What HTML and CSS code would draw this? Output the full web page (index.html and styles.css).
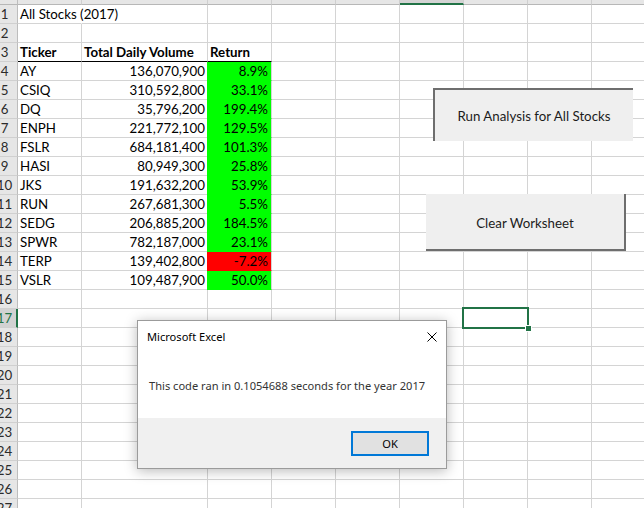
FILE: index.html
```html
<!DOCTYPE html>
<html>
<head>
<meta charset="utf-8">
<link rel="stylesheet" href="styles.css">
</head>
<body>
<div class="sheet">
  <div class="ch corner"></div><div class="ch"></div><div class="ch"></div><div class="ch"></div><div class="ch"></div><div class="ch"></div><div class="ch sel"></div><div class="ch"></div><div class="ch"></div><div class="ch"></div>

  <div class="rh"><span>1</span></div><div class="c over">All Stocks (2017)</div><div class="c"></div><div class="c"></div><div class="c"></div><div class="c"></div><div class="c"></div><div class="c"></div><div class="c"></div><div class="c"></div>
  <div class="rh"><span>2</span></div><div class="c"></div><div class="c"></div><div class="c"></div><div class="c"></div><div class="c"></div><div class="c"></div><div class="c"></div><div class="c"></div><div class="c"></div>
  <div class="rh"><span>3</span></div><div class="c b hb">Ticker</div><div class="c b hb">Total Daily Volume</div><div class="c b hb">Return</div><div class="c"></div><div class="c"></div><div class="c"></div><div class="c"></div><div class="c"></div><div class="c"></div>
  <div class="rh"><span>4</span></div><div class="c">AY</div><div class="c n">136,070,900</div><div class="c n pct g">8.9%</div><div class="c"></div><div class="c"></div><div class="c"></div><div class="c"></div><div class="c"></div><div class="c"></div>
  <div class="rh"><span>5</span></div><div class="c">CSIQ</div><div class="c n">310,592,800</div><div class="c n pct g">33.1%</div><div class="c"></div><div class="c"></div><div class="c"></div><div class="c"></div><div class="c"></div><div class="c"></div>
  <div class="rh"><span>6</span></div><div class="c">DQ</div><div class="c n">35,796,200</div><div class="c n pct g">199.4%</div><div class="c"></div><div class="c"></div><div class="c"></div><div class="c"></div><div class="c"></div><div class="c"></div>
  <div class="rh"><span>7</span></div><div class="c">ENPH</div><div class="c n">221,772,100</div><div class="c n pct g">129.5%</div><div class="c"></div><div class="c"></div><div class="c"></div><div class="c"></div><div class="c"></div><div class="c"></div>
  <div class="rh"><span>8</span></div><div class="c">FSLR</div><div class="c n">684,181,400</div><div class="c n pct g">101.3%</div><div class="c"></div><div class="c"></div><div class="c"></div><div class="c"></div><div class="c"></div><div class="c"></div>
  <div class="rh"><span>9</span></div><div class="c">HASI</div><div class="c n">80,949,300</div><div class="c n pct g">25.8%</div><div class="c"></div><div class="c"></div><div class="c"></div><div class="c"></div><div class="c"></div><div class="c"></div>
  <div class="rh"><span>10</span></div><div class="c">JKS</div><div class="c n">191,632,200</div><div class="c n pct g">53.9%</div><div class="c"></div><div class="c"></div><div class="c"></div><div class="c"></div><div class="c"></div><div class="c"></div>
  <div class="rh"><span>11</span></div><div class="c">RUN</div><div class="c n">267,681,300</div><div class="c n pct g">5.5%</div><div class="c"></div><div class="c"></div><div class="c"></div><div class="c"></div><div class="c"></div><div class="c"></div>
  <div class="rh"><span>12</span></div><div class="c">SEDG</div><div class="c n">206,885,200</div><div class="c n pct g">184.5%</div><div class="c"></div><div class="c"></div><div class="c"></div><div class="c"></div><div class="c"></div><div class="c"></div>
  <div class="rh"><span>13</span></div><div class="c">SPWR</div><div class="c n">782,187,000</div><div class="c n pct g">23.1%</div><div class="c"></div><div class="c"></div><div class="c"></div><div class="c"></div><div class="c"></div><div class="c"></div>
  <div class="rh"><span>14</span></div><div class="c">TERP</div><div class="c n">139,402,800</div><div class="c n pct r">-7.2%</div><div class="c"></div><div class="c"></div><div class="c"></div><div class="c"></div><div class="c"></div><div class="c"></div>
  <div class="rh"><span>15</span></div><div class="c">VSLR</div><div class="c n">109,487,900</div><div class="c n pct g">50.0%</div><div class="c"></div><div class="c"></div><div class="c"></div><div class="c"></div><div class="c"></div><div class="c"></div>
  <div class="rh"><span>16</span></div><div class="c"></div><div class="c"></div><div class="c"></div><div class="c"></div><div class="c"></div><div class="c"></div><div class="c"></div><div class="c"></div><div class="c"></div>
  <div class="rh sel"><span>17</span></div><div class="c"></div><div class="c"></div><div class="c"></div><div class="c"></div><div class="c"></div><div class="c"></div><div class="c"></div><div class="c"></div><div class="c"></div>
  <div class="rh"><span>18</span></div><div class="c"></div><div class="c"></div><div class="c"></div><div class="c"></div><div class="c"></div><div class="c"></div><div class="c"></div><div class="c"></div><div class="c"></div>
  <div class="rh"><span>19</span></div><div class="c"></div><div class="c"></div><div class="c"></div><div class="c"></div><div class="c"></div><div class="c"></div><div class="c"></div><div class="c"></div><div class="c"></div>
  <div class="rh"><span>20</span></div><div class="c"></div><div class="c"></div><div class="c"></div><div class="c"></div><div class="c"></div><div class="c"></div><div class="c"></div><div class="c"></div><div class="c"></div>
  <div class="rh"><span>21</span></div><div class="c"></div><div class="c"></div><div class="c"></div><div class="c"></div><div class="c"></div><div class="c"></div><div class="c"></div><div class="c"></div><div class="c"></div>
  <div class="rh"><span>22</span></div><div class="c"></div><div class="c"></div><div class="c"></div><div class="c"></div><div class="c"></div><div class="c"></div><div class="c"></div><div class="c"></div><div class="c"></div>
  <div class="rh"><span>23</span></div><div class="c"></div><div class="c"></div><div class="c"></div><div class="c"></div><div class="c"></div><div class="c"></div><div class="c"></div><div class="c"></div><div class="c"></div>
  <div class="rh"><span>24</span></div><div class="c"></div><div class="c"></div><div class="c"></div><div class="c"></div><div class="c"></div><div class="c"></div><div class="c"></div><div class="c"></div><div class="c"></div>
  <div class="rh"><span>25</span></div><div class="c"></div><div class="c"></div><div class="c"></div><div class="c"></div><div class="c"></div><div class="c"></div><div class="c"></div><div class="c"></div><div class="c"></div>
  <div class="rh"><span>26</span></div><div class="c"></div><div class="c"></div><div class="c"></div><div class="c"></div><div class="c"></div><div class="c"></div><div class="c"></div><div class="c"></div><div class="c"></div>
  <div class="rh"><span>27</span></div><div class="c"></div><div class="c"></div><div class="c"></div><div class="c"></div><div class="c"></div><div class="c"></div><div class="c"></div><div class="c"></div><div class="c"></div>
</div>

<div class="selbox"><div class="handle"></div></div>

<div class="btn run">Run Analysis for All Stocks</div>
<div class="btn clear">Clear Worksheet</div>

<div class="dlg">
  <div class="dlg-title">
    <span>Microsoft Excel</span>
    <svg class="x" width="10" height="10" viewBox="0 0 10 10"><path d="M0.5 0.5L9.5 9.5M9.5 0.5L0.5 9.5" stroke="#000" stroke-width="1" fill="none"/></svg>
  </div>
  <div class="dlg-body">This code ran in 0.1054688 seconds for the year 2017</div>
  <div class="dlg-foot"><div class="ok">OK</div></div>
</div>
</body>
</html>
```

FILE: styles.css
```css
* { box-sizing: border-box; margin: 0; padding: 0; }
html, body { width: 644px; height: 508px; overflow: hidden; background: #fff; }
body {
  position: relative;
  font-family: Lato, "Liberation Sans", sans-serif;
  font-size: 13.3px;
  color: #000;
}

.sheet {
  display: grid;
  grid-template-columns: 18px 64px 126px repeat(7, 64px);
  grid-template-rows: 5px;
  grid-auto-rows: 19px;
}

.ch {
  background: #e6e6e6;
  border-right: 1px solid #cfcfcf;
  border-bottom: 1px solid #b7b7b7;
}
.ch.corner { border-right-color: #bdbdbd; }
.ch.sel { background: #d4d4d4; border-bottom: 2px solid #217346; }

.rh {
  background: #e6e6e6;
  border-right: 1px solid #bdbdbd;
  border-bottom: 1px solid #d0d0d0;
  display: flex;
  align-items: flex-end;
  justify-content: center;
  padding: 0 8px 1px 0;
  line-height: 16px;
  color: #2b2b2b;
  white-space: nowrap;
}
.rh.sel {
  background: #d2d2d2;
  color: #217346;
  border-right: 2px solid #217346;
  padding-right: 7px;
}

.c {
  border-right: 1px solid #d4d4d4;
  border-bottom: 1px solid #d4d4d4;
  display: flex;
  align-items: flex-end;
  padding: 0 2px 1px 2px;
  line-height: 16px;
  white-space: nowrap;
  min-width: 0;
}
.c.over { border-right-color: transparent; overflow: visible; }
.c.b { font-weight: bold; }
.c.hb { border-bottom-color: #000; }
.c.n { justify-content: flex-end; padding-right: 2px; }
.c.pct { padding-right: 3px; }
.c.g { background: #00ff00; border-bottom-color: #00ff00; box-shadow: -1px 0 0 #00ff00; }
.c.r { background: #ff0000; border-bottom-color: #ff0000; box-shadow: -1px 0 0 #ff0000; }

.selbox {
  position: absolute;
  left: 462px;
  top: 307px;
  width: 67px;
  height: 22px;
  border: 2px solid #217346;
}
.handle {
  position: absolute;
  right: -5px;
  bottom: -5px;
  width: 7px;
  height: 7px;
  background: #217346;
  border: 1px solid #fff;
}

.btn {
  position: absolute;
  background: #efefef;
  display: flex;
  align-items: center;
  justify-content: center;
  color: #1c1c1c;
  white-space: nowrap;
}
.run {
  left: 433px;
  top: 88px;
  width: 200px;
  height: 53px;
  border-top: 2px solid #6e6e6e;
  border-left: 2px solid #6e6e6e;
  padding-top: 1px;
}
.clear {
  left: 426px;
  top: 194px;
  width: 200px;
  height: 57px;
  border-right: 2px solid #6e6e6e;
  border-bottom: 2px solid #6e6e6e;
  padding-top: 2px;
}

.dlg {
  position: absolute;
  left: 137px;
  top: 320px;
  width: 310px;
  height: 149px;
  background: #fff;
  border: 1px solid #9b9b9b;
  box-shadow: 0 2px 12px rgba(0, 0, 0, 0.28);
  display: flex;
  flex-direction: column;
  font-family: "Noto Sans", "Open Sans", sans-serif;
  font-size: 11.1px;
  color: #000;
}
.dlg-title {
  height: 30px;
  display: flex;
  justify-content: space-between;
  align-items: center;
  padding: 0 9px 0 9px;
}
.dlg-title .x { margin-top: 2px; }
.dlg-body {
  flex: 1;
  padding: 27px 0 0 11px;
  color: #333;
}
.dlg-foot {
  height: 50px;
  background: #f0f0f0;
  display: flex;
  justify-content: flex-end;
  padding: 13px 17px 0 0;
}
.ok {
  width: 78px;
  height: 25px;
  border: 2px solid #0078d7;
  background: #e1e1e1;
  display: flex;
  align-items: center;
  justify-content: center;
  color: #000;
}
```
